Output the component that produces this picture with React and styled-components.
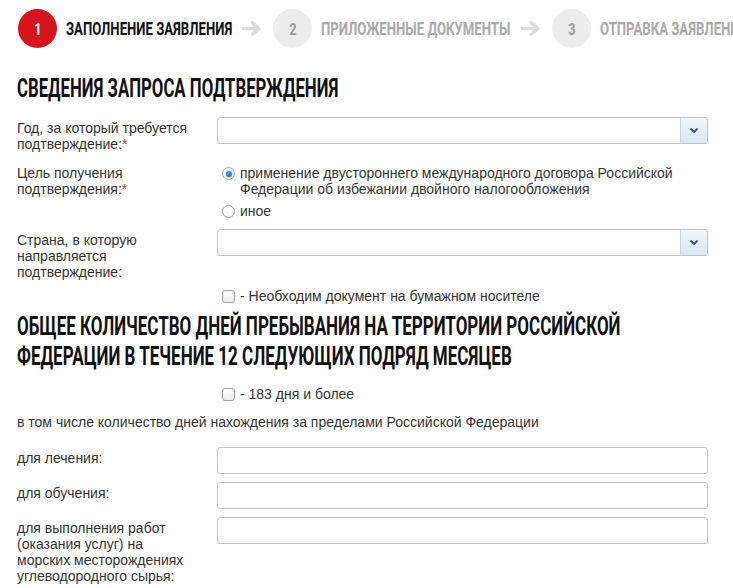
import React from "react";
import styled, { createGlobalStyle } from "styled-components";

const Global = createGlobalStyle`
  html, body { margin: 0; padding: 0; background: #fff; }
  body { font-family: "Liberation Sans", Arial, sans-serif; font-size: 14px; color: #333; }
  * { box-sizing: border-box; }
`;

const Page = styled.div`
  width: 733px;
  padding: 9px 0 0 17px;
  overflow: hidden;
`;

const Steps = styled.div`
  display: flex;
  align-items: center;
  white-space: nowrap;
  margin-left: 1px;
`;

const StepCircle = styled.div`
  flex: none;
  width: 39px;
  height: 39px;
  border-radius: 50%;
  background: ${(p) => (p.$active ? "#d7141b" : "#ececec")};
  color: ${(p) => (p.$active ? "#fff" : "#9a9a9a")};
  display: flex;
  align-items: center;
  justify-content: center;
  font-family: Roboto, sans-serif;
  font-weight: 700;
  font-size: 17px;
`;

const StepNum = styled.span`
  display: inline-block;
  transform: scaleX(0.75);
`;

const StepLabel = styled.div`
  flex: none;
  width: ${(p) => p.$w}px;
  margin-left: 9px;
  font-family: Roboto, sans-serif;
  font-weight: 700;
  font-size: 18.5px;
  line-height: 22px;
  color: ${(p) => (p.$active ? "#111" : "#a9a9a9")};
  overflow: visible;
`;

const Condensed = styled.span`
  display: inline-block;
  white-space: nowrap;
  transform: scaleX(${(p) => p.$sx});
  transform-origin: left center;
`;

const Arrow = styled.svg`
  flex: none;
  margin: 0 11px;
`;

const Title = styled.h2`
  margin: ${(p) => p.$mt}px 0 ${(p) => p.$mb}px;
  font-family: Roboto, sans-serif;
  font-weight: 700;
  font-size: 25px;
  line-height: 30px;
  color: #111;
  white-space: nowrap;
`;

const Row = styled.div`
  display: grid;
  grid-template-columns: 200px 491px;
  align-items: start;
  margin-bottom: ${(p) => p.$mb ?? 10}px;
`;

const Label = styled.div`
  max-width: 180px;
  padding-top: 3px;
  line-height: 16px;
  color: #333;
`;

const Req = styled.span`
  color: #e8242b;
`;

const Field = styled.div`
  height: 27px;
  border: 1px solid #c4c4c4;
  border-radius: 3px;
  background: #fff;
  display: flex;
  justify-content: flex-end;
  overflow: hidden;
`;

const SelectBtn = styled.div`
  width: 27px;
  height: 100%;
  border-left: 1px solid #cdd3da;
  background: linear-gradient(#f2f6fb, #dce7f4);
  display: flex;
  align-items: center;
  justify-content: center;
`;

const RadioGroup = styled.div`
  display: flex;
  flex-direction: column;
  gap: 6px;
  padding: 3px 0 0 5px;
`;

const Option = styled.label`
  display: flex;
  align-items: flex-start;
  gap: 5px;
  line-height: 16px;
  color: #333;
`;

const RadioDot = styled.span`
  flex: none;
  width: 13px;
  height: 13px;
  margin-top: 2px;
  border-radius: 50%;
  border: 1px solid #a3a3a3;
  background: radial-gradient(circle at 50% 40%, #fff 40%, #e6e6e6);
  display: flex;
  align-items: center;
  justify-content: center;
  &::after {
    content: "";
    display: ${(p) => (p.$on ? "block" : "none")};
    width: 6px;
    height: 6px;
    border-radius: 50%;
    background: radial-gradient(circle at 50% 35%, #4a9be8, #1861c2);
    box-shadow: 0 0 1px 0.5px rgba(30, 110, 203, 0.45);
  }
`;

const CheckRow = styled.label`
  display: flex;
  align-items: center;
  gap: 5px;
  margin: ${(p) => p.$mt}px 0 ${(p) => p.$mb}px 205px;
  line-height: 16px;
  color: #333;
`;

const CheckBox = styled.span`
  flex: none;
  width: 13px;
  height: 13px;
  border: 1px solid #9e9e9e;
  border-radius: 3px;
  background: linear-gradient(#fff, #ececec);
`;

const Note = styled.div`
  line-height: 16px;
  color: #333;
  margin: 0 0 17px;
`;

const Chevron = () => (
  <svg width="10" height="7" viewBox="0 0 10 7">
    <path d="M1.5 1.5 L5 5 L8.5 1.5" fill="none" stroke="#1b5fae" strokeWidth="1.8" />
  </svg>
);

const StepArrow = () => (
  <Arrow width="20" height="15" viewBox="0 0 20 15">
    <path d="M1.5 7.5 H16.5 M10.5 1.8 L16.8 7.5 L10.5 13.2" fill="none" stroke="#dcdcdc" strokeWidth="3.6" strokeLinecap="round" strokeLinejoin="round" />
  </Arrow>
);

const Select = () => (
  <Field>
    <SelectBtn>
      <Chevron />
    </SelectBtn>
  </Field>
);

export default function App() {
  return (
    <Page>
      <Global />
      <Steps>
        <StepCircle $active><StepNum>1</StepNum></StepCircle>
        <StepLabel $active $w={165}><Condensed $sx={0.71}>ЗАПОЛНЕНИЕ ЗАЯВЛЕНИЯ</Condensed></StepLabel>
        <StepArrow />
        <StepCircle><StepNum>2</StepNum></StepCircle>
        <StepLabel $w={189}><Condensed $sx={0.71}>ПРИЛОЖЕННЫЕ ДОКУМЕНТЫ</Condensed></StepLabel>
        <StepArrow />
        <StepCircle><StepNum>3</StepNum></StepCircle>
        <StepLabel $w={200}><Condensed $sx={0.71}>ОТПРАВКА ЗАЯВЛЕНИЯ</Condensed></StepLabel>
      </Steps>

      <Title $mt={26} $mb={13}>
        <Condensed $sx={0.67}>СВЕДЕНИЯ ЗАПРОСА ПОДТВЕРЖДЕНИЯ</Condensed>
      </Title>

      <Row>
        <Label>Год, за который требуется подтверждение:<Req>*</Req></Label>
        <Select />
      </Row>

      <Row>
        <Label>Цель получения подтверждения:<Req>*</Req></Label>
        <RadioGroup>
          <Option>
            <RadioDot $on />
            <span>применение двустороннего международного договора Российской Федерации об избежании двойного налогообложения</span>
          </Option>
          <Option>
            <RadioDot />
            <span>иное</span>
          </Option>
        </RadioGroup>
      </Row>

      <Row>
        <Label>Страна, в которую направляется подтверждение:</Label>
        <Select />
      </Row>

      <CheckRow $mt={-2} $mb={8}>
        <CheckBox />
        <span>- Необходим документ на бумажном носителе</span>
      </CheckRow>

      <Title $mt={0} $mb={14}>
        <Condensed $sx={0.68}>ОБЩЕЕ КОЛИЧЕСТВО ДНЕЙ ПРЕБЫВАНИЯ НА ТЕРРИТОРИИ РОССИЙСКОЙ</Condensed>
        <br />
        <Condensed $sx={0.68}>ФЕДЕРАЦИИ В ТЕЧЕНИЕ 12 СЛЕДУЮЩИХ ПОДРЯД МЕСЯЦЕВ</Condensed>
      </Title>

      <CheckRow $mt={0} $mb={12}>
        <CheckBox />
        <span>- 183 дня и более</span>
      </CheckRow>

      <Note>в том числе количество дней нахождения за пределами Российской Федерации</Note>

      <Row $mb={8}>
        <Label>для лечения:</Label>
        <Field />
      </Row>
      <Row $mb={8}>
        <Label>для обучения:</Label>
        <Field />
      </Row>
      <Row $mb={8}>
        <Label>для выполнения работ (оказания услуг) на морских месторождениях углеводородного сырья:</Label>
        <Field />
      </Row>
    </Page>
  );
}
